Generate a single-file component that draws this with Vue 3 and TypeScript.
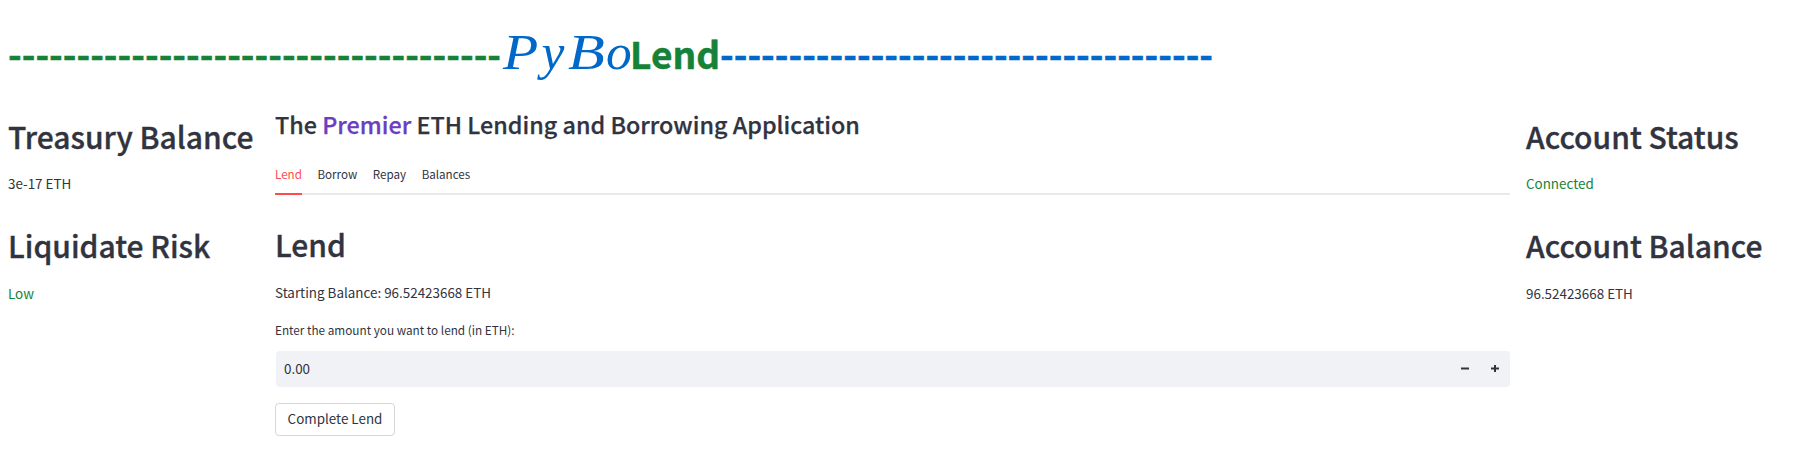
<script setup lang="ts">
import { ref } from 'vue'

const dashes = '-'.repeat(36)
const tabs = ['Lend', 'Borrow', 'Repay', 'Balances']
const active = ref('Lend')
const amount = ref(0)
function step(d: number) {
  amount.value = Math.max(0, amount.value + d)
}
</script>

<template>
  <main class="page">
    <h1 class="title">
      <span class="green">{{ dashes }}</span><span class="math"><i class="m-p">P</i><i class="m-y">y</i><i class="m-b">B</i><i class="m-o">o</i></span><span class="green">Lend</span><span class="blue">{{ dashes }}</span>
    </h1>
    <div class="columns">
      <aside class="side">
        <h2>Treasury Balance</h2>
        <p>3e-17 ETH</p>
        <h2>Liquidate Risk</h2>
        <p class="green">Low</p>
      </aside>
      <section class="center">
        <h3>The <span class="violet">Premier</span> ETH Lending and Borrowing Application</h3>
        <nav class="tabs">
          <button v-for="t in tabs" :key="t" class="tab" :class="{ active: t === active }" @click="active = t">{{ t }}</button>
        </nav>
        <h2>Lend</h2>
        <p>Starting Balance: 96.52423668 ETH</p>
        <label class="label">Enter the amount you want to lend (in ETH):</label>
        <div class="number">
          <span class="value">{{ amount.toFixed(2) }}</span>
          <button class="step" @click="step(-0.01)">
            <svg width="8" height="8" viewBox="0 0 8 8"><path d="M0 2h8v3H0z" fill="#31333f" fill-opacity=".5" /><path d="M0 3h8v1H0z" fill="#31333f" /></svg>
          </button>
          <button class="step" @click="step(0.01)">
            <svg width="8" height="8" viewBox="0 0 8 8"><path d="M0 2h8v3H0z" fill="#31333f" fill-opacity=".5" /><path d="M0 3h8v1H0zM3 0h2v7H3z" fill="#31333f" /></svg>
          </button>
        </div>
        <button class="submit">Complete Lend</button>
      </section>
      <aside class="side">
        <h2>Account Status</h2>
        <p class="green">Connected</p>
        <h2>Account Balance</h2>
        <p>96.52423668 ETH</p>
      </aside>
    </div>
  </main>
</template>

<style>
body {
  background: #fff;
}
</style>

<style scoped>
.page {
  box-sizing: border-box;
  height: 453px;
  padding: 26px 8px 0;
  overflow: hidden;
  color: #31333f;
  font-family: "Noto Sans CJK SC", "Noto Sans", sans-serif;
  font-size: 13.42px;
}
h1, h2, h3, p {
  margin: 0;
  white-space: nowrap;
}
button {
  border: 0;
  padding: 0;
  background: none;
  color: inherit;
  font: inherit;
}
.green { color: #158237; }
.blue { color: #0068c9; }
.violet { color: #6a3fbf; }
.title {
  height: 54px;
  font-size: 37.03px;
  font-weight: 700;
  line-height: 54px;
}
.title > .green,
.title > .blue {
  -webkit-text-stroke: 0.5px currentColor;
}
.math {
  color: #0068c9;
  font-family: "Liberation Serif", serif;
  font-size: 51.5px;
  font-weight: 400;
  line-height: 1px;
}
.math i {
  display: inline-block;
  transform-origin: 0 100%;
}
.m-p { width: 38.5px; margin-left: 2px; transform: scaleX(1.12); }
.m-y { width: 26.5px; }
.m-b { width: 38px; transform: scaleX(1.17); }
.m-o { width: 24px; }
.columns {
  display: grid;
  grid-template-columns: 251px 1235px 263px;
  column-gap: 16px;
}
.side { padding-top: 34px; }
h2 {
  font-size: 30px;
  font-weight: 500;
  line-height: 44px;
  -webkit-text-stroke: 0.35px currentColor;
}
.side p {
  margin-top: 12px;
  line-height: 26px;
}
.side p + h2 { margin-top: 27px; }
.side p:last-child { margin-top: 13px; }
.center { padding-top: 26px; }
h3 {
  font-size: 23.33px;
  font-weight: 500;
  line-height: 36px;
  -webkit-text-stroke: 0.25px currentColor;
}
.tabs {
  display: flex;
  align-items: flex-start;
  gap: 15.6px;
  height: 35px;
  margin-top: 16px;
  border-bottom: 2px solid #e9e9eb;
}
.tab {
  padding-bottom: 3px;
  border-bottom: 2px solid transparent;
  font-size: 11.6px;
  line-height: 32px;
}
.tab.active {
  color: #ff4b4b;
  border-color: #ff4b4b;
}
.center h2 { margin-top: 27px; }
.center p {
  margin-top: 13px;
  line-height: 26px;
}
.label {
  display: block;
  margin-top: 14px;
  font-size: 11.75px;
  line-height: 22px;
}
.number {
  display: flex;
  align-items: center;
  height: 36px;
  margin: 10px 0 16px 1px;
  border-radius: 4px;
  background: #f0f2f6;
}
.value {
  flex: 1;
  padding: 0 0 3px 8px;
}
.step {
  display: grid;
  place-items: center;
  width: 30px;
  height: 36px;
}
.submit {
  box-sizing: border-box;
  width: 120px;
  height: 33px;
  padding-bottom: 3px;
  border: 1px solid #d6d6d9;
  border-radius: 4px;
}
</style>
